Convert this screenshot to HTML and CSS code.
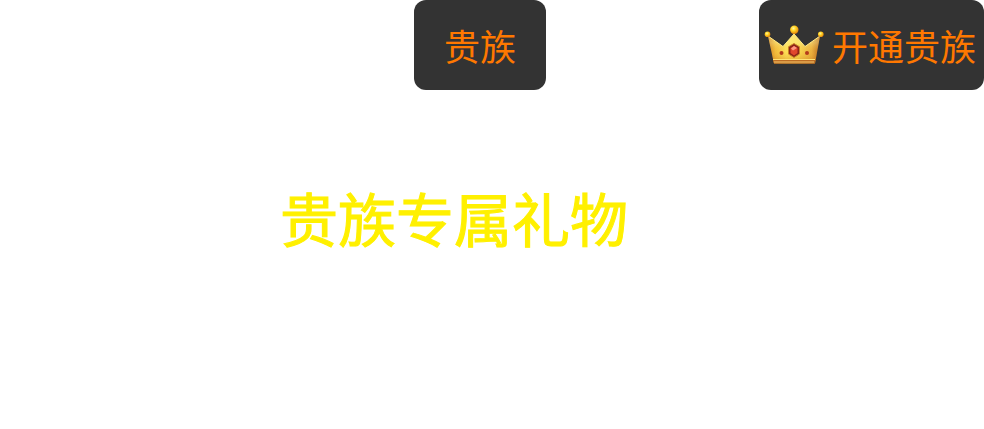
FILE: index.html
```html
<!DOCTYPE html>
<html lang="zh-CN">
<head>
<meta charset="utf-8">
<meta name="viewport" content="width=device-width, initial-scale=1">
<title>贵族专属礼物</title>
<link rel="stylesheet" href="styles.css">
</head>
<body>
<header class="actions">
  <button class="tab" type="button">贵族</button>
  <button class="tab tab-open" type="button">
    <svg class="crown" viewBox="0 0 60 40" aria-hidden="true">
      <defs>
        <linearGradient id="body" x1="0" y1="0" x2="1" y2="0">
          <stop offset="0" stop-color="#c9781f"/>
          <stop offset=".14" stop-color="#f0bb3c"/>
          <stop offset=".35" stop-color="#ffe35a"/>
          <stop offset=".6" stop-color="#f8d850"/>
          <stop offset=".84" stop-color="#e9ae3e"/>
          <stop offset="1" stop-color="#b0601c"/>
        </linearGradient>
        <linearGradient id="shade" x1="0" y1="0" x2="0" y2="1">
          <stop offset=".3" stop-color="#fff5a0" stop-opacity=".35"/>
          <stop offset=".6" stop-color="#f3b52d" stop-opacity=".1"/>
          <stop offset="1" stop-color="#b65a12" stop-opacity=".5"/>
        </linearGradient>
        <radialGradient id="ball" cx=".4" cy=".35" r=".65">
          <stop offset="0" stop-color="#fff6a0"/>
          <stop offset=".45" stop-color="#ffd323"/>
          <stop offset="1" stop-color="#e5860c"/>
        </radialGradient>
      </defs>
      <path d="M4 11 L19 21.500 L30 9 L41 21.500 L56 11 L51 38.500 L10 38.500 Z" fill="url(#body)"/>
      <path d="M4 11 L19 21.500 L30 9 L41 21.500 L56 11 L51 38.500 L10 38.500 Z" fill="url(#shade)"/>
      <path d="M4 11 L19 21.500 L30 9 L41 21.500 L56 11" fill="none" stroke="#ffe987" stroke-width="1"/>
      <path d="M9 34.500 H51.500 L50.500 38.500 H10 Z" fill="#bd6c22"/>
      <path d="M9 34.500 H51" stroke="#ffe375"/>
      <path d="M10 37 H50" stroke="#f6c96a"/>
      <path d="M30 18.500 L35.500 21.800 V29 L30 32.500 L24.500 29 V21.800 Z" fill="#8c2318" stroke="#c88227"/>
      <path d="M30 21 L33.500 23 V28 L30 30.500 L26.500 28 V23 Z" fill="#e0452c"/>
      <path d="M30 21 L33 23 L29 25.500 L27 23.500 Z" fill="#ff9880"/>
      <circle cx="17.500" cy="28" r="2" fill="#b43b1b"/>
      <circle cx="43" cy="28" r="2" fill="#b43b1b"/>
      <circle cx="30.300" cy="4.700" r="4.200" fill="url(#ball)"/>
      <circle cx="3.500" cy="9.300" r="2.800" fill="url(#ball)"/>
      <circle cx="56.800" cy="9.300" r="2.800" fill="url(#ball)"/>
    </svg>
    <span>开通贵族</span>
  </button>
</header>
<main>
  <h1 class="title">贵族专属礼物</h1>
</main>
</body>
</html>
```
FILE: styles.css
```css
* {
  box-sizing: border-box;
}

body {
  margin: 0;
  background: #fff;
  font-family: "Noto Sans CJK SC", sans-serif;
}

.actions {
  display: flex;
  justify-content: flex-end;
  gap: 213px;
}

.tab {
  display: flex;
  align-items: center;
  gap: 8px;
  padding: 18px 30px;
  border: 0;
  border-radius: 12px;
  background: #333;
  color: #ff7800;
  font: inherit;
  font-size: 36px;
  line-height: 54px;
  white-space: nowrap;
}

.tab-open {
  padding: 18px 8px 18px 5px;
}

.crown {
  width: 60px;
  height: 40px;
}

.title {
  margin: 0;
  padding: 88px 76px 0 0;
  color: #fff000;
  font-size: 58px;
  font-weight: 400;
  line-height: 78px;
  text-align: center;
  -webkit-text-stroke: 1px #fff000;
}
```
